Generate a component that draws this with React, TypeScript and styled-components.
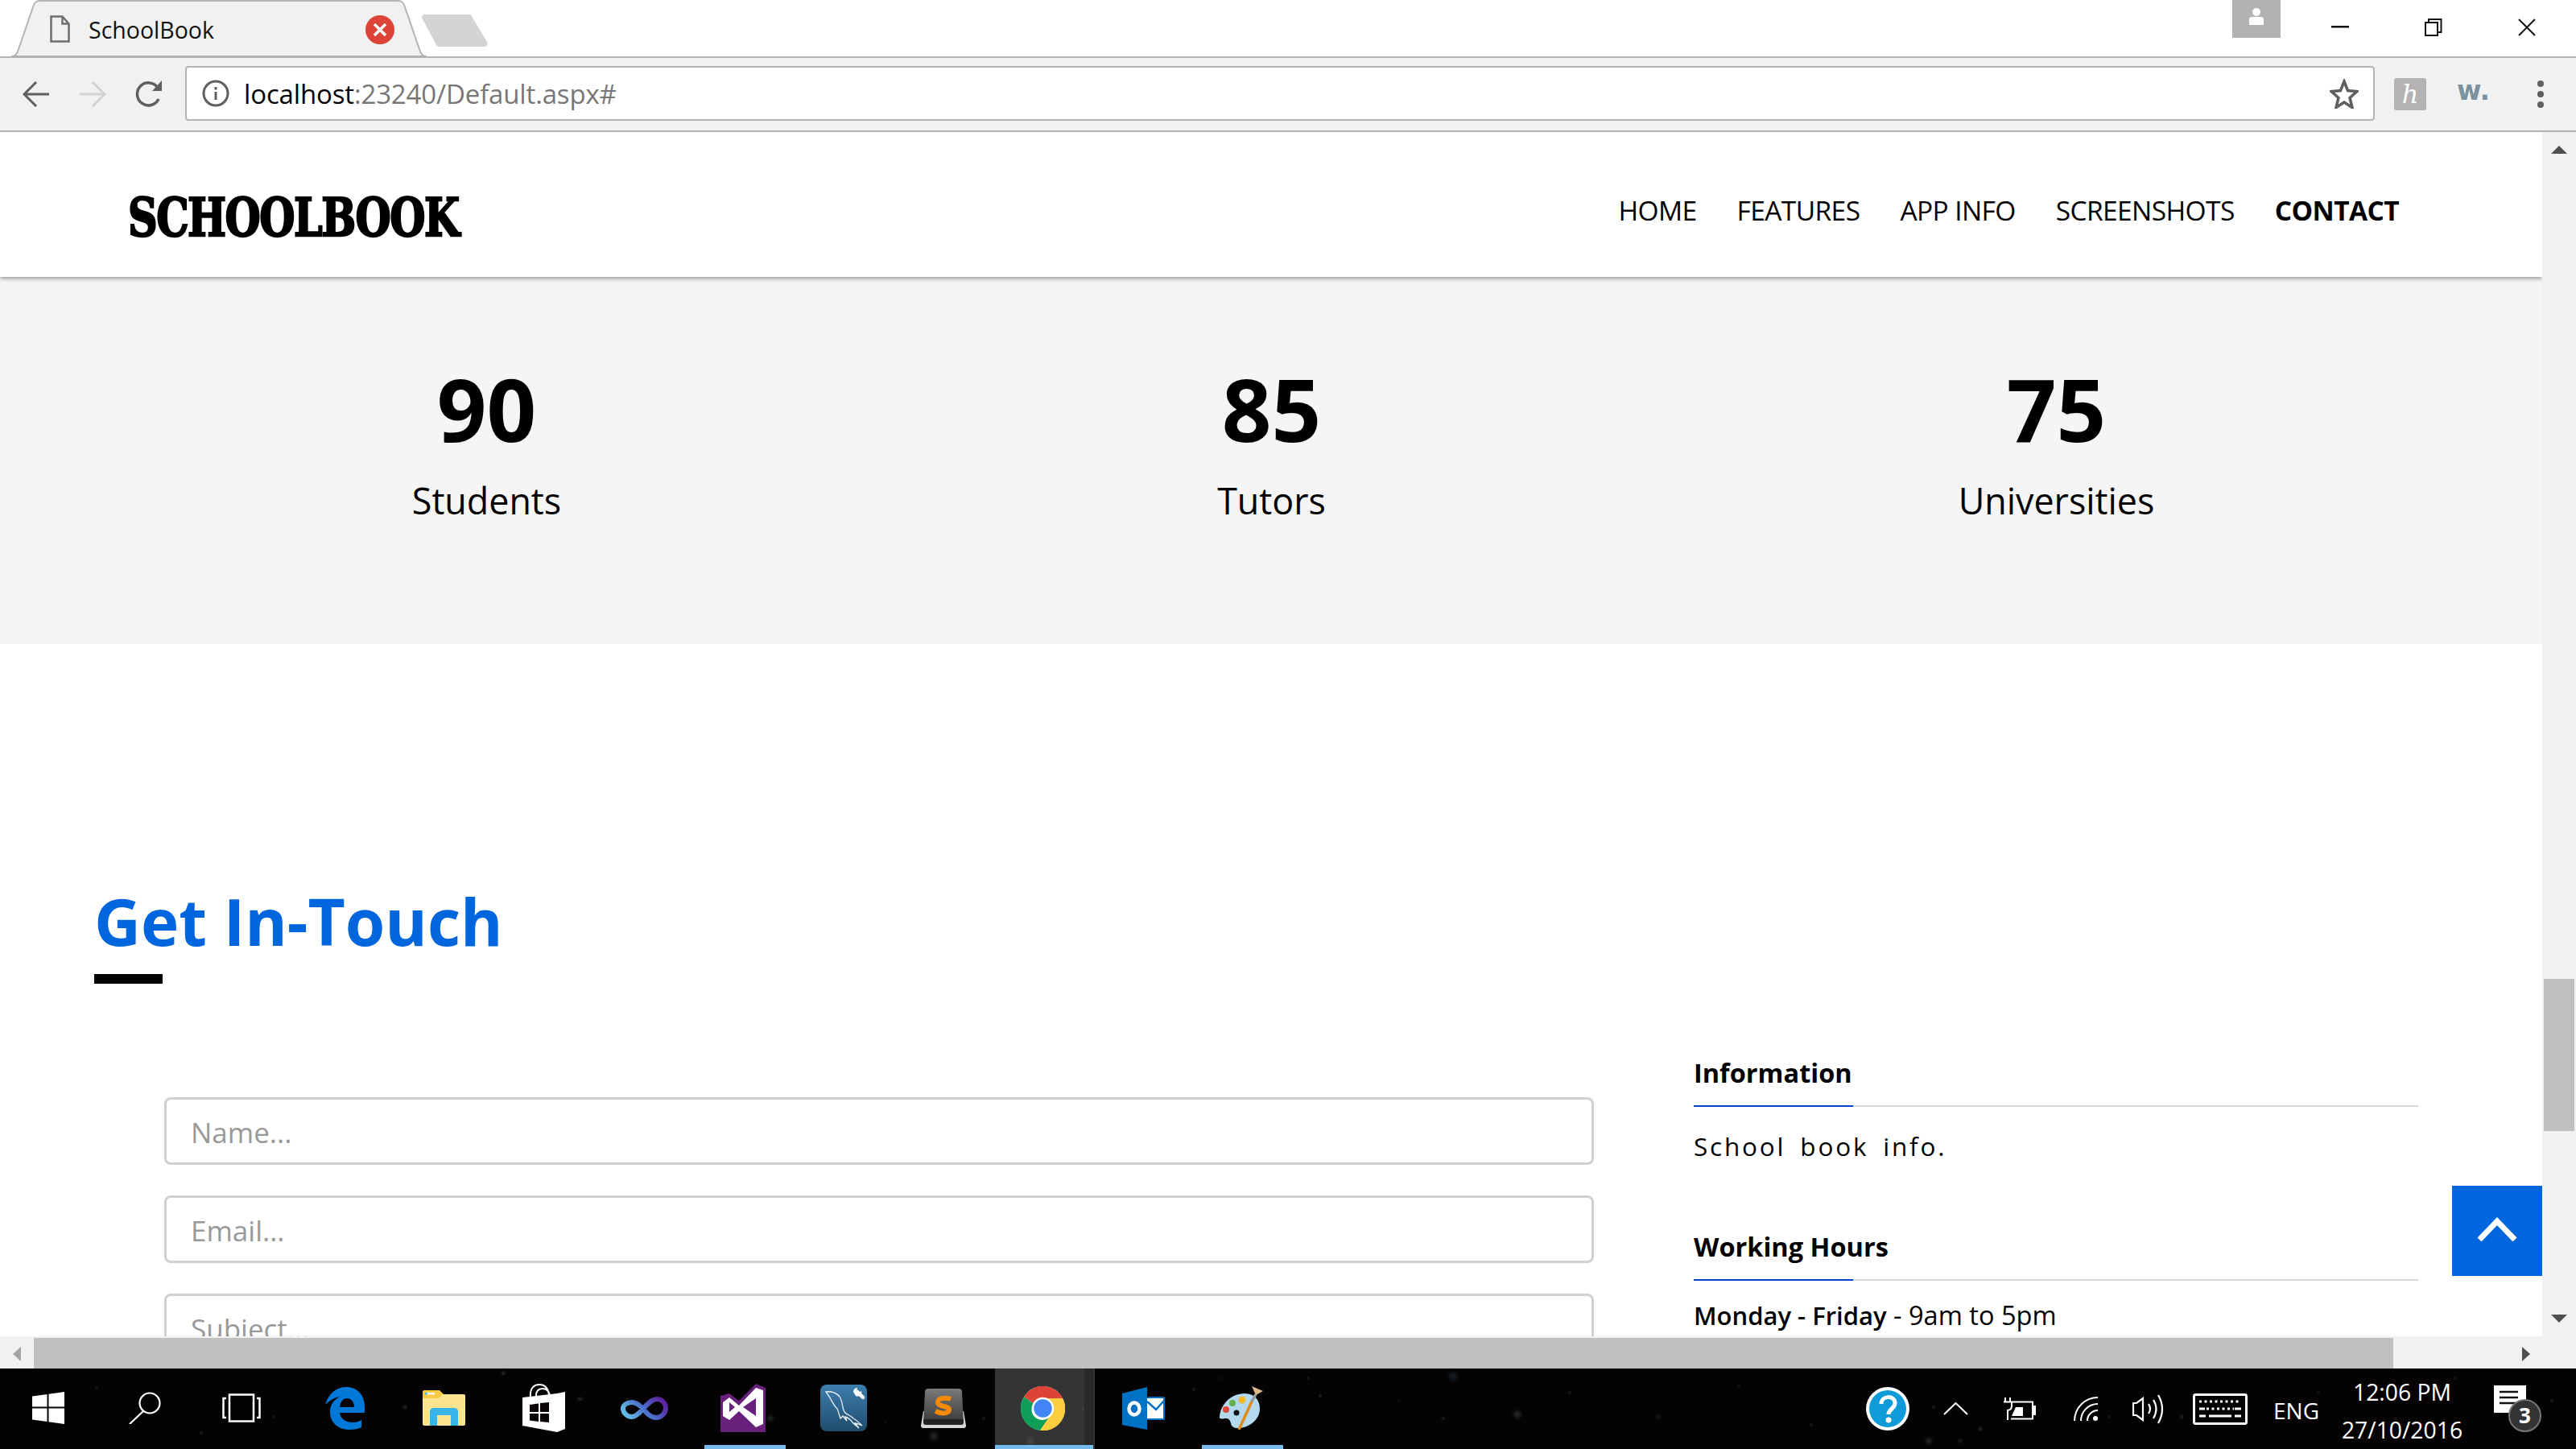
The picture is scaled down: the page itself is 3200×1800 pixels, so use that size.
import React from 'react';
import styled, { createGlobalStyle } from 'styled-components';

const GlobalStyle = createGlobalStyle`
  html, body { margin: 0; padding: 0; background: #fff; overflow: hidden; }
  * { box-sizing: border-box; }
  body { font-family: "Open Sans", "Noto Sans", sans-serif; color: #000; }
`;

const Screen = styled.div`
  width: 3200px;
  height: 1800px;
  display: flex;
  flex-direction: column;
  overflow: hidden;
`;

// ---- browser chrome ----
const TabStrip = styled.div`
  height: 72px;
  flex: none;
  display: flex;
  align-items: flex-start;
  background: #fff;
  border-bottom: 2px solid #b4b4b4;
`;
const Tab = styled.div`
  position: relative;
  width: 516px;
  height: 72px;
  margin-left: 14px;
  flex: none;
  padding: 19px 40px 0 48px;
  display: flex;
  align-items: flex-start;
  gap: 23px;
  z-index: 1;
`;
const TabShape = styled.svg`
  position: absolute;
  left: 0;
  top: 0;
`;
const TabTitle = styled.span`
  position: relative;
  flex: 1;
  font-size: 28.5px;
  line-height: 36px;
  color: #111;
`;
const TabIcon = styled.svg`
  position: relative;
  flex: none;
`;
const NewTab = styled.svg`
  margin: 18px 0 0 -6px;
  flex: none;
`;
const WindowControls = styled.div`
  margin-left: auto;
  padding-right: 3px;
  display: flex;
  align-items: flex-start;
`;
const ProfileBadge = styled.div`
  width: 60px;
  height: 47px;
  margin-right: 16px;
  background: #b2b2b2;
  display: flex;
  align-items: flex-start;
  justify-content: center;
  padding-top: 9px;
`;
const WindowButton = styled.div`
  width: 116px;
  height: 68px;
  display: flex;
  align-items: center;
  justify-content: center;
`;
const Toolbar = styled.div`
  height: 92px;
  flex: none;
  display: flex;
  align-items: center;
  background: #f1f1f1;
  border-bottom: 2px solid #b4b4b4;
  padding-left: 28px;
`;
const NavIcon = styled.svg<{ $gap: number }>`
  flex: none;
  margin-right: ${({ $gap }) => $gap}px;
`;
const Omnibox = styled.div`
  width: 2720px;
  height: 68px;
  margin-top: -2px;
  flex: none;
  background: #fff;
  border: 2px solid #b4b4b4;
  border-radius: 4px;
  display: flex;
  align-items: center;
  padding: 0 18px 0 19px;
`;
const UrlText = styled.div`
  margin-left: 18px;
  font-size: 33px;
  letter-spacing: -0.15px;
  color: #777;
  flex: 1;
  white-space: nowrap;
`;
const UrlHost = styled.span`
  color: #000;
`;
const Extensions = styled.div`
  display: flex;
  align-items: center;
  margin-left: 24px;
`;
const ExtIcon = styled.div`
  width: 40px;
  height: 40px;
  background: #b3b3b3;
  border-radius: 3px;
  display: flex;
  align-items: center;
  justify-content: center;
  color: #fff;
  font-family: "DejaVu Serif", serif;
  font-style: italic;
  font-size: 32px;
  line-height: 1;
`;
const ExtWord = styled.div`
  margin-left: 38px;
  width: 46px;
  font-family: "DejaVu Sans", sans-serif;
  font-weight: 700;
  font-size: 33px;
  line-height: 40px;
  margin-top: -8px;
  color: #7b92a0;
`;
const MenuDots = styled.div`
  margin-left: 54px;
  display: flex;
  flex-direction: column;
  gap: 5px;
`;
const MenuDot = styled.span`
  width: 8px;
  height: 8px;
  border-radius: 50%;
  background: #5f5f5f;
`;

// ---- page ----
const Middle = styled.div`
  flex: 1;
  min-height: 0;
  display: flex;
`;
const Page = styled.div`
  position: relative;
  flex: 1;
  min-width: 0;
  overflow: hidden;
  padding-top: 180px;
  background: #fff;
`;
// the site's navbar is fixed: it lies over the scrolled content
const Header = styled.header`
  position: absolute;
  left: 0;
  right: 0;
  top: 0;
  height: 180px;
  display: flex;
  align-items: flex-start;
  justify-content: space-between;
  padding: 0 178px 0 159px;
  background: #fff;
  box-shadow: 0 2px 5px rgba(0, 0, 0, 0.4);
`;
const Logo = styled.div`
  margin-top: 71px;
  width: 411px;
  font-family: "DejaVu Serif", serif;
  font-weight: 700;
  font-size: 66px;
  line-height: 70px;
  letter-spacing: -2px;
  color: #000;
  white-space: nowrap;
  transform: scaleX(0.77);
  transform-origin: left center;
  -webkit-text-stroke: 2.5px #000;
`;
const NavList = styled.nav`
  display: flex;
  gap: 50px;
  padding-top: 73px;
`;
const NavLink = styled.a<{ $active?: boolean }>`
  font-size: 33.5px;
  line-height: 48px;
  letter-spacing: -0.6px;
  font-weight: ${({ $active }) => ($active ? 700 : 400)};
  color: #000;
`;
const Stats = styled.section`
  height: 456px;
  background: #f5f5f5;
  padding: 104px 0 0 117px;
  display: grid;
  grid-template-columns: repeat(3, 975px);
  align-items: start;
`;
const Stat = styled.div`
  text-align: center;
`;
const StatValue = styled.div`
  font-size: 108px;
  font-weight: 700;
  line-height: 120px;
`;
const StatLabel = styled.div`
  margin-top: 24px;
  font-size: 44.8px;
  line-height: 60px;
`;
const Contact = styled.section`
  padding: 294px 0 0 117px;
`;
const Title = styled.h2`
  margin: 0;
  font-size: 80px;
  line-height: 100px;
  font-weight: 700;
  color: #0066dd;
`;
const TitleRule = styled.div`
  width: 85px;
  height: 12px;
  margin-top: 16px;
  background: #000;
`;
const ContactRow = styled.div`
  display: flex;
  align-items: flex-start;
  margin-top: 86px;
`;
const Form = styled.form`
  width: 1776px;
  margin-left: 87px;
  padding-top: 55px;
  display: flex;
  flex-direction: column;
  gap: 38px;
  flex: none;
`;
const Field = styled.input`
  width: 100%;
  height: 84px;
  padding: 2px 30px 0;
  border: 3px solid #d0d0d0;
  border-radius: 8px;
  font-family: "Open Sans", sans-serif;
  font-size: 35px;
  background: #fff;
  &::placeholder { color: #999; opacity: 1; }
`;
const Aside = styled.aside`
  width: 900px;
  margin-left: 124px;
  flex: none;
`;
const AsideHeading = styled.h4`
  position: relative;
  margin: 0;
  height: 67px;
  border-bottom: 2px solid #d8d8d8;
  font-size: 32.5px;
  line-height: 50px;
  font-weight: 700;
  &::after {
    content: '';
    position: absolute;
    left: 0;
    bottom: -2px;
    width: 198px;
    height: 2px;
    background: #0a3fd4;
  }
`;
const AsideText = styled.p`
  margin: 24px 0 75px;
  font-size: 31.5px;
  line-height: 50px;
  letter-spacing: 2.8px;
  word-spacing: 7px;
`;
const HoursText = styled.p`
  margin: 18px 0 0;
  font-size: 32.6px;
  line-height: 50px;
`;
const HoursDays = styled.b`
  font-size: 31px;
  font-weight: 600;
`;
const BackToTop = styled.div`
  position: absolute;
  right: 0;
  top: 1309px;
  width: 112px;
  height: 112px;
  padding-bottom: 4px;
  background: #0066dd;
  display: flex;
  align-items: center;
  justify-content: center;
`;

// ---- scrollbars ----
const VScroll = styled.div`
  width: 42px;
  flex: none;
  background: #f1f1f1;
  display: flex;
  flex-direction: column;
  align-items: center;
  position: relative;
`;
const VThumb = styled.div`
  width: 38px;
  height: 189px;
  margin-top: 1052px;
  background: #c0c0c0;
`;
const ArrowUp = styled.span`
  position: absolute;
  top: 17px;
  border-left: 10px solid transparent;
  border-right: 10px solid transparent;
  border-bottom: 10px solid #505050;
`;
const ArrowDown = styled.span`
  position: absolute;
  bottom: 17px;
  border-left: 10px solid transparent;
  border-right: 10px solid transparent;
  border-top: 10px solid #505050;
`;
const HScroll = styled.div`
  height: 40px;
  flex: none;
  background: #f1f1f1;
  display: flex;
  align-items: flex-end;
  padding-left: 16px;
`;
const ArrowLeft = styled.span`
  flex: none;
  margin-bottom: 9px;
  border-top: 9px solid transparent;
  border-bottom: 9px solid transparent;
  border-right: 10px solid #a4a4a4;
`;
const HThumb = styled.div`
  width: 2931px;
  height: 38px;
  margin-left: 16px;
  flex: none;
  background: #c0c0c0;
`;
const ArrowRight = styled.span`
  flex: none;
  margin: 0 0 9px 160px;
  border-top: 9px solid transparent;
  border-bottom: 9px solid transparent;
  border-left: 10px solid #505050;
`;

// ---- taskbar ----
// [x, y, radius, colour] of the wallpaper's stars, y from the top of the bar
const stars: [number, number, number, string][] = [
  [503, 48, 4, '#26262a'], [625, 6, 4, '#26262a'], [720, 38, 4, '#202024'], [779, 38, 3, '#1c1c20'],
  [722, 38, 3, '#1c1c20'], [1160, 84, 8, '#1f2a2c'], [957, 62, 6, '#1b2628'], [1222, 62, 3, '#1c1c20'],
  [1100, 66, 2, '#181820'], [1483, 26, 3, '#202024'], [1517, 12, 2, '#1c1c20'], [1640, 34, 3, '#26262a'],
  [1625, 12, 3, '#202024'], [1760, 36, 2, '#1c1c20'], [1805, 10, 8, '#15212a'], [1885, 57, 7, '#2b2b2b'],
  [1793, 62, 3, '#202024'], [1738, 40, 2, '#1c1c20'], [1950, 30, 3, '#1a1a1e'], [2060, 60, 4, '#1a1c20'],
  [2160, 22, 3, '#1c1c20'], [2250, 70, 3, '#1c1c20'], [2402, 48, 3, '#202024'], [2460, 75, 4, '#26262a'],
  [2396, 90, 6, '#26262a'], [2435, 90, 4, '#222226'], [2620, 60, 3, '#1c1c20'], [2710, 60, 4, '#222226'],
  [2880, 30, 3, '#1c1c20'], [3050, 12, 3, '#1c1c20'], [3170, 40, 3, '#1c1c20'], [120, 24, 3, '#1c1c20'],
  [250, 80, 3, '#1c1c20'], [340, 60, 3, '#1c1c20'], [1345, 50, 3, '#3f3f3f'], [1280, 90, 7, '#454545'],
];
const starField = stars
  .map(([x, y, r, c]) => `radial-gradient(circle at ${x}px ${y}px, ${c} 0, transparent ${r}px)`)
  .join(',');

const Taskbar = styled.div`
  height: 100px;
  flex: none;
  display: flex;
  align-items: stretch;
  color: #fff;
  background-color: #050203;
  background-image: ${starField};
`;
const Slot = styled.div<{ $active?: boolean; $running?: boolean; $nudge?: number }>`
  position: relative;
  width: 123.6px;
  flex: none;
  display: flex;
  align-items: center;
  justify-content: center;
  padding-bottom: 2px;
  padding-right: ${({ $nudge = 0 }) => $nudge * 2}px;
  background: ${({ $active }) => ($active ? 'rgba(72, 72, 72, 0.72)' : 'transparent')};
  &::before {
    content: '';
    display: ${({ $active }) => ($active ? 'block' : 'none')};
    position: absolute;
    top: 0;
    bottom: 0;
    right: 2px;
    width: 11px;
    background: rgba(0, 0, 0, 0.22);
  }
  &::after {
    content: '';
    display: ${({ $active, $running }) => ($active || $running ? 'block' : 'none')};
    position: absolute;
    bottom: 0;
    left: ${({ $active }) => ($active ? '0' : '10px')};
    right: ${({ $active }) => ($active ? '2px' : '13px')};
    height: 5px;
    background: #76b9ed;
  }
`;
const Tray = styled.div`
  margin-left: auto;
  display: flex;
  align-items: center;
  padding-right: 43px;
`;
const TrayIcon = styled.svg<{ $gap: number }>`
  flex: none;
  margin-right: ${({ $gap }) => $gap}px;
`;
const TrayLang = styled.span`
  font-size: 28px;
  width: 84px;
  margin-top: 4px;
`;
const Clock = styled.div`
  width: 152px;
  margin-right: 38px;
  text-align: center;
  font-size: 28.3px;
  line-height: 47px;
  margin-top: 6px;
  white-space: nowrap;
`;
const Notify = styled.div`
  position: relative;
  width: 59px;
  height: 58px;
  flex: none;
`;
const NotifyBadge = styled.div`
  position: absolute;
  right: 0;
  bottom: 0;
  width: 41px;
  height: 41px;
  border-radius: 50%;
  background: #333;
  border: 2px solid #777;
  font-size: 26px;
  font-weight: 700;
  line-height: 36px;
  text-align: center;
`;

// ---- icons ----
const WinIcon = () => (
  <svg width="40" height="40" viewBox="0 0 40 40" fill="#fff">
    <path d="M0 5.500 18.500 3v15.500H0zM20.500 2.700 40 0v18.500H20.500zM0 20.500h18.500V37L0 34.500zM20.500 20.500H40V40l-19.500-2.700z" />
  </svg>
);
const SearchIcon = () => (
  <svg width="40" height="40" viewBox="0 0 40 40" fill="none" stroke="#fff" strokeWidth="2.200">
    <circle cx="26" cy="14" r="12.500" />
    <path d="M18 24 1 40" />
  </svg>
);
const TaskViewIcon = () => (
  <svg width="48" height="36" viewBox="0 0 48 36" fill="none" stroke="#fff" strokeWidth="2.500">
    <rect x="9" y="1.500" width="30" height="33" />
    <path d="M5 6H1.500v24H5M43 6h3.500v24H43" />
  </svg>
);
const EdgeIcon = () => (
  <svg width="50" height="53" viewBox="0 0 50 53">
    <path
      fill="#0078d7"
      fillRule="evenodd"
      d="M1 22C5 8 15 0 27 0c14 0 23 10 23 25v7H19c1 8 8 12 16 12 4 0 8-1 11-3v9c-4 2-9 3-15 3C17 53 7 44 7 31c0-9 5-16 13-19C12 13 6 17 1 22zM19 25h18c0-7-4-11-9-11-5 0-8 4-9 11z"
    />
  </svg>
);
const ExplorerIcon = () => (
  <svg width="53" height="44" viewBox="0 0 53 44">
    <path fill="#fbc943" d="M0 2q0-2 2-2h19l5 5v5H0z" />
    <rect x="3" y="3" width="12" height="2.500" fill="#f4f8fa" />
    <rect x="3" y="3" width="2.500" height="2.500" fill="#38b4e8" />
    <path fill="#fde58f" d="M0 10h20l5-5h26q2 0 2 2v35q0 2-2 2H2q-2 0-2-2z" />
    <path fill="#38b4e8" d="M9 44V27q0-5 5-5h25q5 0 5 5v17h-9V31H18v13z" />
  </svg>
);
const StoreIcon = () => (
  <svg width="53" height="60" viewBox="0 0 53 60">
    <path fill="none" stroke="#fff" strokeWidth="2" d="M10 16C9 6 14 1 21 1s11 5 12 13M17 15c0-6 3-9 8-9s8 3 9 9" />
    <path fill="#fff" d="M0 17 43 12l10-2v46l-10 4L0 52z" />
    <path fill="#0a0506" d="M9 26l11-1.500V35H9zM22 24l11-1v12H22zM9 37h11v10l-11-1.500zM22 37h11v11l-11-1z" />
  </svg>
);
const InfinityIcon = () => (
  <svg width="59" height="29" viewBox="0 0 59 29">
    <defs>
      <linearGradient id="inf" x1="0" y1="0.6" x2="1" y2="0.2">
        <stop offset="0" stopColor="#62b8e4" />
        <stop offset="0.5" stopColor="#4a6ac8" />
        <stop offset="1" stopColor="#5c1f9c" />
      </linearGradient>
    </defs>
    <path
      fill="none"
      stroke="url(#inf)"
      strokeWidth="6"
      d="M14 7C8 7 3 10 3 15s5 10 11 10c10 0 18-21 31-22 6 0 11 5 11 11s-5 12-12 12c-7 0-12-6-17-12-5-5-9-7-13-7z"
    />
  </svg>
);
const VsIcon = () => (
  <svg width="56" height="60" viewBox="0 0 56 60">
    <path fill="#68217a" d="M0 15 11 12 23 21 44 0 56 5v55H0z" />
    <path
      fill="#fff"
      fillRule="evenodd"
      d="M3 23 11 17 23 27 44 5 53 8v42l-9 4L23 34 11 45 3 40zM11 23v12l7-6zM44 18 28 29l16 11z"
    />
  </svg>
);
const MysqlIcon = () => (
  <svg width="58" height="58" viewBox="0 0 58 58">
    <defs>
      <linearGradient id="sql" x1="0" y1="0" x2="0" y2="1">
        <stop offset="0" stopColor="#3d7fae" />
        <stop offset="1" stopColor="#1f4c6c" />
      </linearGradient>
    </defs>
    <rect width="58" height="58" rx="8" fill="url(#sql)" />
    <path
      fill="none"
      stroke="#e8f0f4"
      strokeWidth="1.300"
      d="M7 9c7-1 13 1 17 6 4 6 3 14 6 19 3 4 8 4 11 8 3 1 6 4 11 9-4-2-6-3-9-3l5 6-7-6c-3-4-6-7-10-8l2 5-5-6-3 3c-2-5-2-8-4-12C16 26 13 16 7 9z"
    />
    <path d="M46 9l7 7" stroke="#fff" strokeWidth="4.500" strokeLinecap="round" />
    <path d="M41 9a5 5 0 0 1 5-5l-1 4 3 2 3-2a5 5 0 0 1-7 6z" fill="#fff" />
  </svg>
);
const SublimeIcon = () => (
  <svg width="56" height="49" viewBox="0 0 56 49">
    <defs>
      <linearGradient id="sub" x1="0" y1="0" x2="0" y2="1">
        <stop offset="0" stopColor="#7a7a7a" />
        <stop offset="1" stopColor="#3a3a3a" />
      </linearGradient>
    </defs>
    <path fill="#d8d8d8" d="M3 28 0 46q0 3 3 3h50q3 0 3-3l-3-18z" />
    <path fill="url(#sub)" d="M5 4q0-4 4-4h38q4 0 4 4l2 38H3z" />
    <path fill="#222" d="M3 38h50v4q0 3-3 3H6q-3 0-3-3z" />
    <path
      fill="none"
      stroke="#f58a07"
      strokeWidth="6"
      d="M37 13c-5-2-16-2-16 4 0 6 14 4 14 9 0 6-11 5-17 2"
    />
  </svg>
);
const ChromeIcon = () => (
  <svg width="55" height="55" viewBox="0 0 48 48">
    <circle cx="24" cy="24" r="24" fill="#fff" />
    <path fill="#db4437" d="M3.500 11.500A24 24 0 0 1 45.500 13H24a11 11 0 0 0-10 6z" />
    <path fill="#0f9d58" d="M3.500 11.500A24 24 0 0 0 21 48l11-16a11 11 0 0 1-18-13z" />
    <path fill="#ffcd40" d="M45.500 13A24 24 0 0 1 21 48l12-18a11 11 0 0 0-9-17z" />
    <circle cx="24" cy="24" r="12" fill="#fff" />
    <circle cx="24" cy="24" r="9.800" fill="#4285f4" />
  </svg>
);
const OutlookIcon = () => (
  <svg width="53" height="53" viewBox="0 0 53 53">
    <path fill="#0072c6" d="M0 8 31 0v53L0 47z" />
    <ellipse cx="15" cy="27" rx="6.500" ry="7.500" fill="none" stroke="#fff" strokeWidth="4.500" />
    <rect x="31" y="12" width="22" height="29" rx="1.500" fill="#0072c6" />
    <rect x="31" y="14" width="20" height="25" fill="#fff" />
    <path fill="none" stroke="#0072c6" strokeWidth="2.500" d="M31 18l11 10 10-11" />
  </svg>
);
const PaintIcon = () => (
  <svg width="55" height="54" viewBox="0 0 55 54">
    <path fill="#b4d8ee" d="M1 38C2 22 16 9 32 9c13 0 19 9 19 19 0 14-14 24-27 24-6 0-8-2-9-6-1-4-3-6-6-6-3 0-9 2-8-2z" />
    <circle cx="9" cy="29" r="4" fill="#e04a3a" />
    <circle cx="17" cy="21" r="4" fill="#64b04a" />
    <circle cx="29" cy="17" r="4.500" fill="#f5b62c" />
    <circle cx="22" cy="33" r="3.500" fill="#111" />
    <path fill="none" stroke="#e08a1e" strokeWidth="3.500" d="M41 19 25 54" />
    <path fill="none" stroke="#999" strokeWidth="3.500" d="M46 10 41 19" />
    <path fill="#dcb98a" d="M41 0 55 6 46 11z" />
  </svg>
);

const taskbarIcons = [
  { key: 'win', icon: <WinIcon />, nudge: 2 },
  { key: 'search', icon: <SearchIcon />, nudge: 5 },
  { key: 'tasks', icon: <TaskViewIcon />, nudge: 9 },
  { key: 'edge', icon: <EdgeIcon />, nudge: 5 },
  { key: 'explorer', icon: <ExplorerIcon />, nudge: 5 },
  { key: 'store', icon: <StoreIcon />, nudge: 4 },
  { key: 'infinity', icon: <InfinityIcon />, nudge: 3 },
  { key: 'vs', icon: <VsIcon />, running: true, nudge: 4 },
  { key: 'mysql', icon: <MysqlIcon />, nudge: 3 },
  { key: 'sublime', icon: <SublimeIcon />, nudge: 2 },
  { key: 'chrome', icon: <ChromeIcon />, active: true, nudge: 2 },
  { key: 'outlook', icon: <OutlookIcon />, nudge: 1 },
  { key: 'paint', icon: <PaintIcon />, running: true, nudge: 3 },
];

const App: React.FC = () => (
  <Screen>
    <GlobalStyle />
    <TabStrip>
      <Tab>
        <TabShape width="516" height="72" viewBox="0 0 516 72">
          <path d="M0 70q6 0 8-6L28 6q2-5 8-5h444q6 0 8 5l20 58q2 6 8 6z" fill="#f1f1f1" stroke="#b4b4b4" strokeWidth="2" />
        </TabShape>
        <TabIcon width="25" height="34" viewBox="0 0 25 34" fill="none" stroke="#6e6e6e" strokeWidth="2.500">
          <path d="M1.500 1.500h14l8 9v22h-22zM15.500 1.500v9h8" />
        </TabIcon>
        <TabTitle>SchoolBook</TabTitle>
        <TabIcon width="36" height="36" viewBox="0 0 36 36">
          <circle cx="18" cy="18" r="18" fill="#db4437" />
          <path d="M11 11l14 14M25 11 11 25" stroke="#fff" strokeWidth="3.500" />
        </TabIcon>
      </Tab>
      <NewTab width="82" height="40" viewBox="0 0 82 40">
        <path d="M3 0h55q4 0 5 4l18 30q2 6-4 6H22q-4 0-5-4L0 4q0-4 3-4z" fill="#d4d4d4" />
      </NewTab>
      <WindowControls>
        <ProfileBadge>
          <svg width="22" height="22" viewBox="0 0 22 22" fill="#fff">
            <circle cx="11" cy="6" r="5" />
            <path d="M2 15q0-3 4-3h10q4 0 4 3v7H2z" />
          </svg>
        </ProfileBadge>
        <WindowButton>
          <svg width="22" height="4" viewBox="0 0 22 4">
            <rect width="22" height="2.500" fill="#111" />
          </svg>
        </WindowButton>
        <WindowButton>
          <svg width="22" height="22" viewBox="0 0 22 22" fill="none" stroke="#111" strokeWidth="2">
            <rect x="1" y="5" width="15" height="16" />
            <path d="M5 5V1h15.500v16H16" />
          </svg>
        </WindowButton>
        <WindowButton>
          <svg width="22" height="22" viewBox="0 0 22 22" fill="none" stroke="#111" strokeWidth="2">
            <path d="M1 1l20 20M21 1 1 21" />
          </svg>
        </WindowButton>
      </WindowControls>
    </TabStrip>

    <Toolbar>
      <NavIcon $gap={36} width="34" height="32" viewBox="0 0 34 32" fill="none" stroke="#5f5f5f" strokeWidth="3">
        <path d="M33 16H3M17 1 2 16l15 15" />
      </NavIcon>
      <NavIcon $gap={36} width="34" height="32" viewBox="0 0 34 32" fill="none" stroke="#d2d2d2" strokeWidth="3">
        <path d="M1 16h30M17 1l15 15-15 15" />
      </NavIcon>
      <NavIcon $gap={28} width="34" height="34" viewBox="0 0 34 34" fill="none" stroke="#5f5f5f" strokeWidth="3.500">
        <path d="M29 23a14 14 0 1 1-1-14" />
        <path d="M33 0v13H21z" fill="#5f5f5f" stroke="none" />
      </NavIcon>
      <Omnibox>
        <svg width="34" height="34" viewBox="0 0 34 34">
          <circle cx="17" cy="17" r="15" fill="none" stroke="#5f5f5f" strokeWidth="3" />
          <rect x="15.500" y="15" width="3" height="10" fill="#5f5f5f" />
          <rect x="15.500" y="9" width="3" height="3.500" fill="#5f5f5f" />
        </svg>
        <UrlText>
          <UrlHost>localhost</UrlHost>:23240/Default.aspx#
        </UrlText>
        <svg width="36" height="37" viewBox="0 0 36 37">
          <path
            d="M18 3l4.500 11.500L34 15.500l-9 8 3 12-10-6.500-10 6.500 3-12-9-8 11.500-1z"
            fill="none"
            stroke="#5f5f5f"
            strokeWidth="3.500"
          />
        </svg>
      </Omnibox>
      <Extensions>
        <ExtIcon>h</ExtIcon>
        <ExtWord>w.</ExtWord>
        <MenuDots>
          <MenuDot />
          <MenuDot />
          <MenuDot />
        </MenuDots>
      </Extensions>
    </Toolbar>

    <Middle>
      <Page>
        <Stats>
          <Stat>
            <StatValue>90</StatValue>
            <StatLabel>Students</StatLabel>
          </Stat>
          <Stat>
            <StatValue>85</StatValue>
            <StatLabel>Tutors</StatLabel>
          </Stat>
          <Stat>
            <StatValue>75</StatValue>
            <StatLabel>Universities</StatLabel>
          </Stat>
        </Stats>
        <Contact>
          <Title>Get In-Touch</Title>
          <TitleRule />
          <ContactRow>
            <Form>
              <Field placeholder="Name..." />
              <Field placeholder="Email..." />
              <Field placeholder="Subject..." />
            </Form>
            <Aside>
              <AsideHeading>Information</AsideHeading>
              <AsideText>School book info.</AsideText>
              <AsideHeading>Working Hours</AsideHeading>
              <HoursText>
                <HoursDays>Monday - Friday</HoursDays> - 9am to 5pm
              </HoursText>
            </Aside>
          </ContactRow>
        </Contact>
        <Header>
          <Logo>SCHOOLBOOK</Logo>
          <NavList>
            <NavLink>HOME</NavLink>
            <NavLink>FEATURES</NavLink>
            <NavLink>APP INFO</NavLink>
            <NavLink>SCREENSHOTS</NavLink>
            <NavLink $active>CONTACT</NavLink>
          </NavList>
        </Header>
        <BackToTop>
          <svg width="50" height="30" viewBox="0 0 50 30" fill="none" stroke="#fff" strokeWidth="7">
            <path d="M3 28 25 5l22 23" />
          </svg>
        </BackToTop>
      </Page>
      <VScroll>
        <ArrowUp />
        <VThumb />
        <ArrowDown />
      </VScroll>
    </Middle>

    <HScroll>
      <ArrowLeft />
      <HThumb />
      <ArrowRight />
    </HScroll>

    <Taskbar>
      {taskbarIcons.map(({ key, icon, active, running, nudge }) => (
        <Slot key={key} $active={active} $running={running} $nudge={nudge}>
          {icon}
        </Slot>
      ))}
      <Tray>
        <TrayIcon $gap={42} width="54" height="54" viewBox="0 0 54 54">
          <circle cx="27" cy="27" r="27" fill="#fff" />
          <circle cx="27" cy="27" r="23" fill="#0f9ad8" />
          <path d="M19 21c0-11 17-11 17-1 0 7-8 7-8 14" fill="none" stroke="#fff" strokeWidth="5" />
          <circle cx="28" cy="41" r="3.500" fill="#fff" />
        </TrayIcon>
        <TrayIcon $gap={43} width="31" height="16" viewBox="0 0 31 16" fill="none" stroke="#fff" strokeWidth="2">
          <path d="M1 15 15.500 1 30 15" />
        </TrayIcon>
        <TrayIcon $gap={47} width="41" height="28" viewBox="0 0 41 28" fill="none" stroke="#fff" strokeWidth="2">
          <path d="M3 0v6M9 0v6M1 5.500h10v5q0 5-5 5.500v12" />
          <path d="M12 5.500h25v21H10" />
          <path d="M37 11h3v10h-3" fill="#fff" />
          <path d="M16 12h9v11H11z" fill="#fff" stroke="none" />
        </TrayIcon>
        <TrayIcon $gap={41} width="32" height="30" viewBox="0 0 32 30" fill="none" stroke="#fff" strokeWidth="2">
          <path d="M1 30A29 29 0 0 1 30 1M9 30A21 21 0 0 1 30 9M17 30A13 13 0 0 1 30 17" />
          <circle cx="27" cy="27" r="3" fill="#fff" stroke="none" />
        </TrayIcon>
        <TrayIcon $gap={35} width="40" height="37" viewBox="0 0 40 37" fill="none" stroke="#fff" strokeWidth="2.200">
          <path d="M1 11h4l8-6v27l-8-6H1z" />
          <path d="M20 12q4 6 0 12M26 7q7 11 0 23M32 1q10 17 0 35" />
        </TrayIcon>
        <TrayIcon $gap={32} width="68" height="39" viewBox="0 0 68 39">
          <rect x="1.500" y="1.500" width="65" height="36" rx="2" fill="none" stroke="#fff" strokeWidth="3" />
          <path d="M8 10h52" stroke="#fff" strokeWidth="3" strokeDasharray="3 3.500" />
          <path d="M17 19h34" stroke="#fff" strokeWidth="3" strokeDasharray="3 3.500" />
          <path d="M8 19h7M52 19h8M8 28h8M20 28h28M52 28h8" stroke="#fff" strokeWidth="3" />
        </TrayIcon>
        <TrayLang>ENG</TrayLang>
        <Clock>
          12:06 PM
          <br />
          27/10/2016
        </Clock>
        <Notify>
          <svg width="40" height="34" viewBox="0 0 40 34">
            <path d="M0 0h40v34H0z" fill="#fff" />
            <path d="M7 8h23M7 15h23M7 22h23" stroke="#111" strokeWidth="2.500" />
          </svg>
          <NotifyBadge>3</NotifyBadge>
        </Notify>
      </Tray>
    </Taskbar>
  </Screen>
);

export default App;
